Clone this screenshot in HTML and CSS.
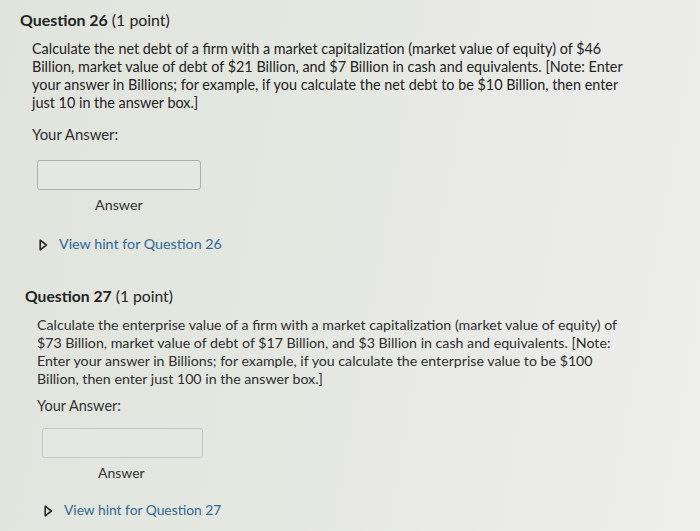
FILE: index.html
```html
<!DOCTYPE html>
<html>
<head>
<meta charset="utf-8">
<link rel="stylesheet" href="styles.css">
</head>
<body>
<div class="page">
  <section class="question q26">
    <h2 class="qtitle"><b>Question 26</b> (1 point)</h2>
    <div class="qbody">
      <p class="qtext">Calculate the net debt of a ﬁrm with a market capitalization (market value of equity) of $46 Billion, market value of debt of $21 Billion, and $7 Billion in cash and equivalents. [Note: Enter your answer in Billions; for example, if you calculate the net debt to be $10 Billion, then enter just 10 in the answer box.]</p>
      <div class="label">Your Answer:</div>
      <div class="inputbox"></div>
      <div class="caption">Answer</div>
      <div class="hint"><svg class="tri" width="9" height="12" viewBox="0 0 9 12"><polygon points="1.2,1.2 7.4,6 1.2,10.8" fill="none" stroke="#2a2a2a" stroke-width="1.6" stroke-linejoin="round"/></svg><span class="hintlink">View hint for Question 26</span></div>
    </div>
  </section>
  <section class="question q27">
    <h2 class="qtitle"><b>Question 27</b> (1 point)</h2>
    <div class="qbody">
      <p class="qtext">Calculate the enterprise value of a ﬁrm with a market capitalization (market value of equity) of $73 Billion, market value of debt of $17 Billion, and $3 Billion in cash and equivalents. [Note: Enter your answer in Billions; for example, if you calculate the enterprise value to be $100 Billion, then enter just 100 in the answer box.]</p>
      <div class="label">Your Answer:</div>
      <div class="inputbox"></div>
      <div class="caption">Answer</div>
      <div class="hint"><svg class="tri" width="9" height="12" viewBox="0 0 9 12"><polygon points="1.2,1.2 7.4,6 1.2,10.8" fill="none" stroke="#2a2a2a" stroke-width="1.6" stroke-linejoin="round"/></svg><span class="hintlink">View hint for Question 27</span></div>
    </div>
  </section>
</div>
</body>
</html>
```

FILE: styles.css
```css
html, body {
  margin: 0;
  padding: 0;
}
body {
  width: 700px;
  height: 531px;
  overflow: hidden;
  background: linear-gradient(100deg, #e1e3dd 0%, #e5e7e1 45%, #ebecea 80%, #eeeeec 100%);
  font-family: Lato, "Open Sans", sans-serif;
  color: #232323;
}
.page {
  display: flex;
  flex-direction: column;
}
.question {
  display: flex;
  flex-direction: column;
}
.q26 {
  padding: 10px 0 0 20px;
}
.q27 {
  padding: 33px 0 0 25px;
}
.qtitle {
  margin: 0;
  font-size: 15.9px;
  line-height: 20px;
  font-weight: normal;
}
.qtitle b {
  font-weight: bold;
}
.q27 .qtitle {
  font-size: 15.7px;
}
.qbody {
  padding-left: 12px;
  margin-top: 10px;
}
.qtext {
  margin: 0;
  font-size: 14.4px;
  line-height: 18px;
  width: 602px;
}
.q27 .qtext {
  font-size: 14.2px;
  width: 598px;
  color: #2e2e2e;
}
.label {
  font-size: 14.9px;
  line-height: 18px;
  margin-top: 13px;
  color: #2c2c2c;
}
.inputbox {
  margin-top: 17px;
  margin-left: 5px;
  width: 164px;
  height: 30px;
  border: 1px solid #adb1ad;
  border-radius: 3px;
  background: #e5e7e2;
  box-sizing: border-box;
}
.q27 .label { margin-top: 9px; font-size: 14.5px; color: #333; }
.q27 .inputbox { margin-top: 13px; width: 161px; border-color: #c3c7c2; }
.caption {
  margin-top: 6px;
  margin-left: 63px;
  font-size: 14.3px;
  line-height: 18px;
  color: #333;
}
.q27 .caption { margin-left: 61px; font-size: 14px; }
.hint {
  display: flex;
  align-items: center;
  margin-top: 21px;
  margin-left: 7px;
  font-size: 14.3px;
  line-height: 18px;
}
.q27 .hint { margin-top: 19px; margin-left: 7px; font-size: 13.8px; }
.tri {
  display: block;
  margin-right: 11px;
  margin-top: 2px;
}
.hintlink {
  color: #2f6a94;
}
```
